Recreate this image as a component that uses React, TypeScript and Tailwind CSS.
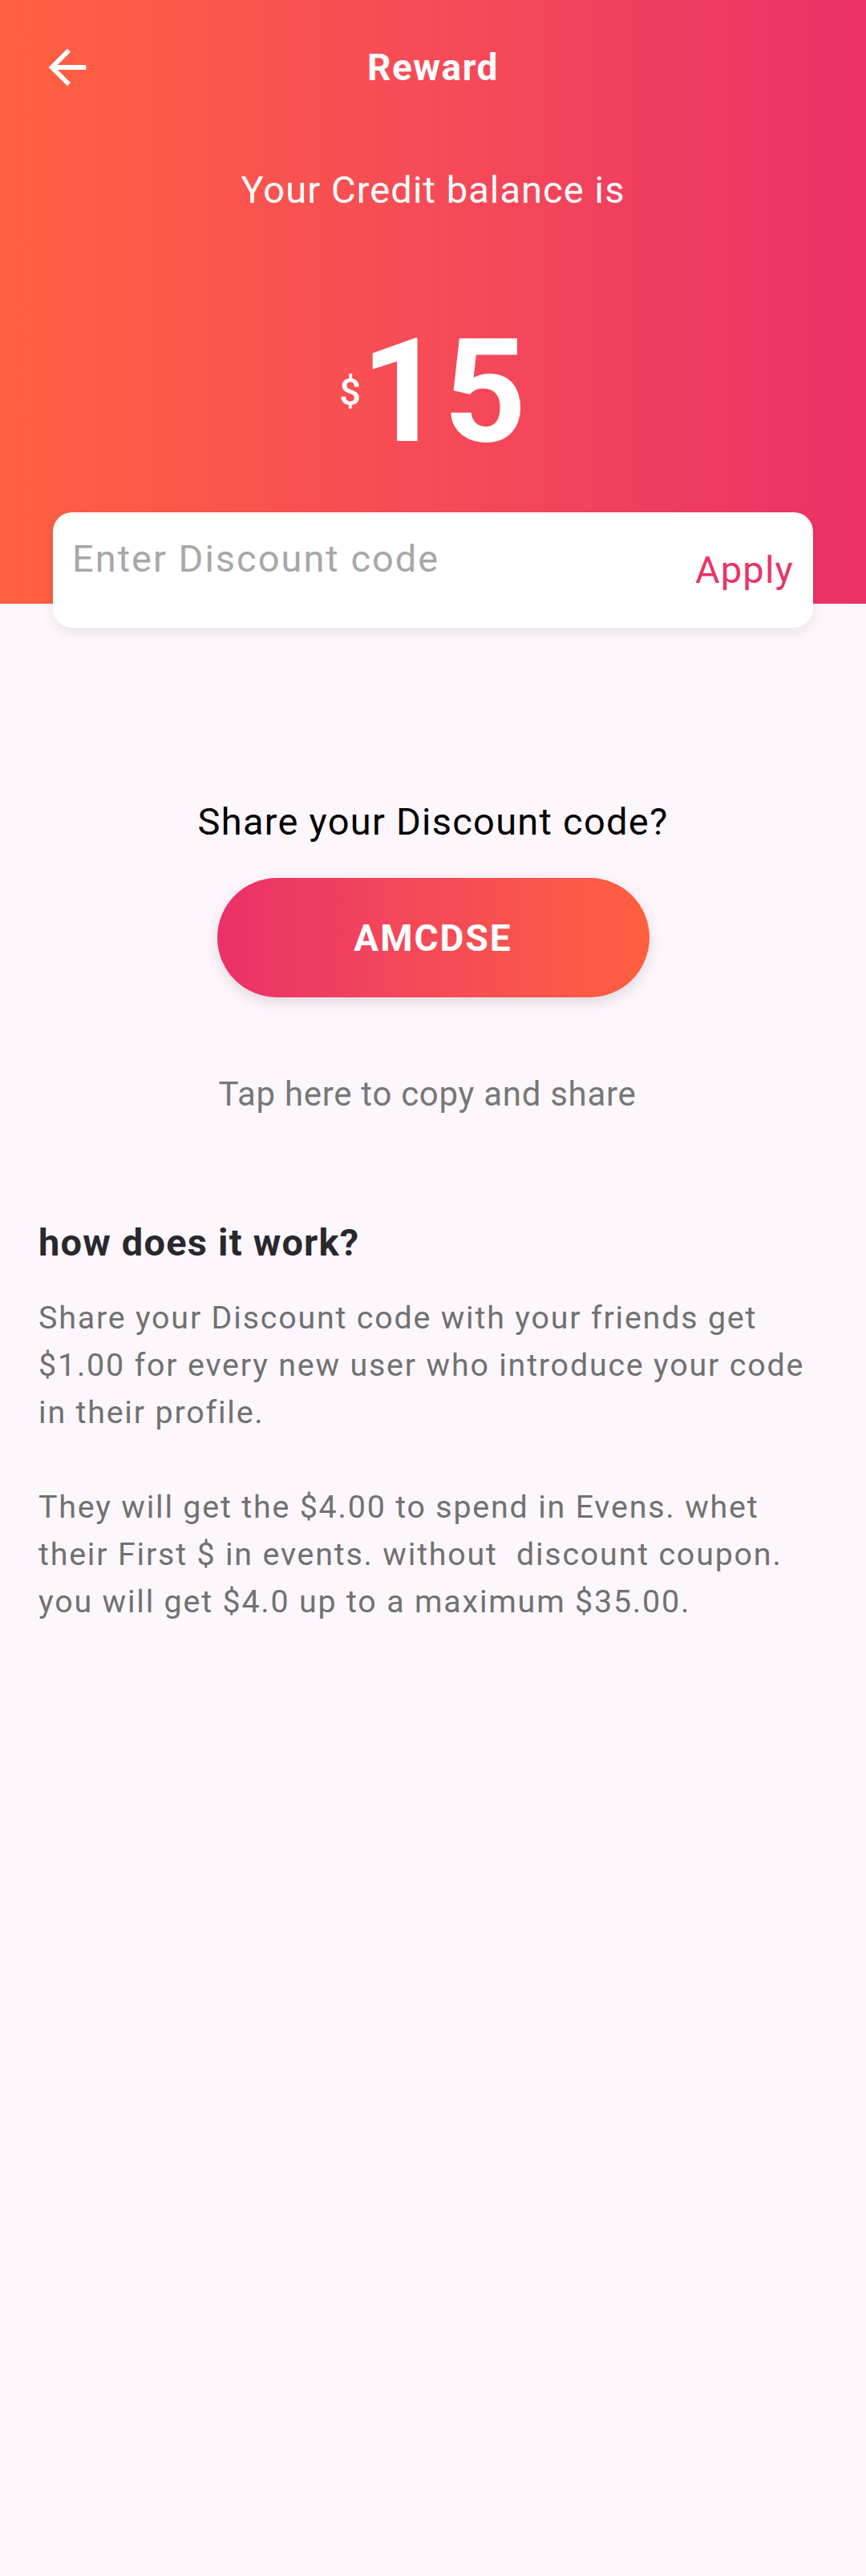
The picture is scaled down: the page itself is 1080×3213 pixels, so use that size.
export default function App() {
  const p1 = [
    "Share your Discount code with your friends get",
    "$1.00 for every new user who introduce your code",
    "in their profile.",
  ];
  const p2 = [
    "They will get the $4.00 to spend in Evens. whet",
    "their First $ in events. without  discount coupon.",
    "you will get $4.0 up to a maximum $35.00.",
  ];
  return (
    <div className="min-h-[3213px] w-full bg-[#fdf7fd] font-[family-name:Roboto,sans-serif]">
      <div className="h-[753px] bg-linear-to-r from-[#ff6040] to-[#ec3067] flex flex-col">
        <div className="h-[168px] grid grid-cols-[1fr_auto_1fr] items-center">
          <div className="pl-[49px] flex items-center">
            <svg width="70" height="70" viewBox="0 0 24 24">
              <path
                fill="white"
                d="M20 11H7.83l5.59-5.59L12 4l-8 8 8 8 1.41-1.41L7.83 13H20v-2z"
              />
            </svg>
          </div>
          <div className="text-[46px] leading-[56px] font-bold text-white tracking-[1.5px]">Reward</div>
          <div />
        </div>
        <div className="mt-[41px] text-center text-[47px] leading-[56px] text-white tracking-[1.1px]">
          Your Credit balance is
        </div>
        <div className="mt-[134px] flex items-center justify-center text-white">
          <span className="text-[47px] leading-[56px] font-medium">$</span>
          <span className="text-[180px] leading-[180px] font-bold">15</span>
        </div>
      </div>

      <div className="relative -mt-[114px] mx-[66px] h-[144px] bg-white rounded-[24px] shadow-[0_6px_16px_rgba(0,0,0,0.08)] flex items-center px-[24px]">
        <input
          placeholder="Enter Discount code"
          className="self-start mt-[30px] h-[56px] flex-1 min-w-0 bg-transparent outline-none text-[47px] leading-[56px] tracking-[2px] text-[#333] placeholder:text-[#a8a8a8]"
        />
        <span className="text-[47px] leading-[56px] text-[#e83468] tracking-[1.2px]">Apply</span>
      </div>

      <div className="mt-[214px] text-center text-[47px] leading-[56px] text-black tracking-[1.25px]">
        Share your Discount code?
      </div>
      <div className="mt-[42px] flex justify-center">
        <button className="w-[539px] h-[149px] rounded-full bg-linear-to-r from-[#eb3068] to-[#ff5f3e] shadow-[0_6px_18px_rgba(0,0,0,0.12)] text-white font-bold text-[46px] leading-[56px] tracking-[2px]">
          AMCDSE
        </button>
      </div>
      <div className="mt-[96px] text-center text-[42px] leading-[50px] text-[#777777] pr-[14px] tracking-[0.7px]">
        Tap here to copy and share
      </div>

      <div className="mt-[132px] px-[48px]">
        <div className="text-[47px] leading-[56px] font-bold text-[#29282d] tracking-[1.2px]">how does it work?</div>
        <div className="mt-[36px] text-[39.4px] leading-[59px] text-[#717171] tracking-[1.8px]">
          {p1.map((l) => (
            <div key={l} className="whitespace-pre">{l}</div>
          ))}
          <div className="h-[59px]" />
          {p2.map((l) => (
            <div key={l} className="whitespace-pre">{l}</div>
          ))}
        </div>
      </div>
    </div>
  );
}
